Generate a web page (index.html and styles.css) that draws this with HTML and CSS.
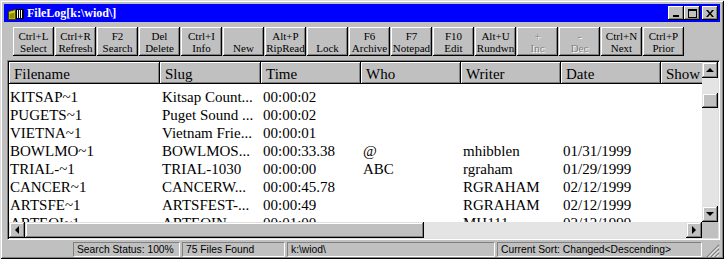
FILE: index.html
```html
<!DOCTYPE html>
<html lang="en">
<head>
  <meta charset="UTF-8" />
  <title>FileLog</title>
  <link rel="stylesheet" href="styles.css">
</head>
<body>
  <div class="window">
    <!-- Title bar -->
    <div class="titlebar">
      <svg class="app-icon" width="16" height="12" viewBox="0 0 16 12">
        <path d="M0.5 3.5 L7.5 1.5 L7.5 11.5 L0.5 11.5 Z" fill="#d8d020" stroke="#404000"/>
        <path d="M1.5 6 L6.5 4.5 L6.5 10.5 L1.5 10.5 Z" fill="#909000"/>
        <rect x="8.5" y="1.5" width="7" height="9" fill="#fff" stroke="#000"/>
        <rect x="10" y="2" width="1" height="8" fill="#000"/>
        <rect x="12" y="2" width="1" height="8" fill="#000"/>
        <rect x="14" y="2" width="1" height="8" fill="#000"/>
      </svg>
      <span class="title">FileLog[k:\wiod\]</span>
      <div class="caption-buttons">
        <span class="cap-btn">
          <svg width="8" height="7" viewBox="0 0 8 7"><rect x="1" y="5" width="6" height="2" fill="#000"/></svg>
        </span>
        <span class="cap-btn">
          <svg width="9" height="9" viewBox="0 0 9 9"><rect x="0.5" y="0.5" width="8" height="8" fill="none" stroke="#000"/><rect x="0" y="1" width="9" height="1" fill="#000"/></svg>
        </span>
        <span class="cap-btn close">
          <svg width="8" height="7" viewBox="0 0 8 7"><path d="M0 0h2l2 2.5L6 0h2L5 3.5 8 7H6L4 4.5 2 7H0l3-3.5z" fill="#000"/></svg>
        </span>
      </div>
    </div>

    <!-- Toolbar -->
    <div class="toolbar">
      <div class="tool"><span class="key">Ctrl+L</span><span>Select</span></div>
      <div class="tool"><span class="key">Ctrl+R</span><span>Refresh</span></div>
      <div class="tool"><span class="key">F2</span><span>Search</span></div>
      <div class="tool"><span class="key">Del</span><span>Delete</span></div>
      <div class="tool"><span class="key">Ctrl+I</span><span>Info</span></div>
      <div class="tool"><span class="key"></span><span>New</span></div>
      <div class="tool"><span class="key">Alt+P</span><span>RipRead</span></div>
      <div class="tool"><span class="key"></span><span>Lock</span></div>
      <div class="tool"><span class="key">F6</span><span>Archive</span></div>
      <div class="tool"><span class="key">F7</span><span>Notepad</span></div>
      <div class="tool"><span class="key">F10</span><span>Edit</span></div>
      <div class="tool"><span class="key">Alt+U</span><span>Rundwn</span></div>
      <div class="tool disabled"><span class="key">+</span><span>Inc</span></div>
      <div class="tool disabled"><span class="key">-</span><span>Dec</span></div>
      <div class="tool"><span class="key">Ctrl+N</span><span>Next</span></div>
      <div class="tool"><span class="key">Ctrl+P</span><span>Prior</span></div>
    </div>

    <!-- File list -->
    <div class="listview">
      <div class="list-header">
        <div class="hcell c-file">Filename</div>
        <div class="hcell c-slug">Slug</div>
        <div class="hcell c-col">Time</div>
        <div class="hcell c-col">Who</div>
        <div class="hcell c-col">Writer</div>
        <div class="hcell c-col">Date</div>
        <div class="hcell c-col">Show</div>
      </div>

      <div class="vscroll">
        <div class="sb-btn"><span class="arrow up"></span></div>
        <div class="sb-track v-before"></div>
        <div class="sb-thumb v-thumb"></div>
        <div class="sb-track fill"></div>
        <div class="sb-btn"><span class="arrow down"></span></div>
      </div>

      <div class="list-body">
        <div class="row"><span class="c-file">KITSAP~1</span><span class="c-slug">Kitsap Count...</span><span class="c-col">00:00:02</span><span class="c-col"></span><span class="c-col"></span><span class="c-col"></span></div>
        <div class="row"><span class="c-file">PUGETS~1</span><span class="c-slug">Puget Sound ...</span><span class="c-col">00:00:02</span><span class="c-col"></span><span class="c-col"></span><span class="c-col"></span></div>
        <div class="row"><span class="c-file">VIETNA~1</span><span class="c-slug">Vietnam Frie...</span><span class="c-col">00:00:01</span><span class="c-col"></span><span class="c-col"></span><span class="c-col"></span></div>
        <div class="row"><span class="c-file">BOWLMO~1</span><span class="c-slug">BOWLMOS...</span><span class="c-col">00:00:33.38</span><span class="c-col">@</span><span class="c-col">mhibblen</span><span class="c-col">01/31/1999</span></div>
        <div class="row"><span class="c-file">TRIAL-~1</span><span class="c-slug">TRIAL-1030</span><span class="c-col">00:00:00</span><span class="c-col">ABC</span><span class="c-col">rgraham</span><span class="c-col">01/29/1999</span></div>
        <div class="row"><span class="c-file">CANCER~1</span><span class="c-slug">CANCERW...</span><span class="c-col">00:00:45.78</span><span class="c-col"></span><span class="c-col">RGRAHAM</span><span class="c-col">02/12/1999</span></div>
        <div class="row"><span class="c-file">ARTSFE~1</span><span class="c-slug">ARTSFEST-...</span><span class="c-col">00:00:49</span><span class="c-col"></span><span class="c-col">RGRAHAM</span><span class="c-col">02/12/1999</span></div>
        <div class="row"><span class="c-file">ARTEQI~1</span><span class="c-slug">ARTEQIN...</span><span class="c-col">00:01:00</span><span class="c-col"></span><span class="c-col">MH111</span><span class="c-col">02/12/1999</span></div>
      </div>

      <div class="hscroll">
        <div class="sb-btn"><span class="arrow left"></span></div>
        <div class="sb-thumb h-thumb"></div>
        <div class="sb-track fill"></div>
        <div class="sb-btn"><span class="arrow right"></span></div>
      </div>
      <div class="corner"></div>
    </div>

    <!-- Status bar -->
    <div class="statusbar">
      <div class="panel p-search">Search Status: 100%</div>
      <div class="panel p-found">75 Files Found</div>
      <div class="panel p-path">k:\wiod\</div>
      <div class="panel p-sort">Current Sort: Changed&lt;Descending&gt;</div>
      <svg class="grip" width="16" height="15" viewBox="0 0 16 15">
        <path d="M15 3 L3 15 M15 7 L7 15 M15 11 L11 15" stroke="#808080" stroke-width="1.2"/>
        <path d="M15 4.5 L4.5 15 M15 8.5 L8.5 15 M15 12.5 L12.5 15" stroke="#fff" stroke-width="1"/>
      </svg>
    </div>
  </div>
</body>
</html>
```

FILE: styles.css
```css
/* ---------------------------------------
   1. RESET & WINDOW FRAME
--------------------------------------- */
* {
  margin: 0;
  padding: 0;
  box-sizing: border-box;
}

html, body {
  width: 724px;
  height: 259px;
  overflow: hidden;
  background: #c0c0c0;
}

.window {
  width: 724px;
  height: 259px;
  padding: 4px 4px 2px 4px;
  background: #c0c0c0;
  display: flex;
  flex-direction: column;
  overflow: hidden;
  font-family: "Liberation Serif", "Times New Roman", serif;
  color: #000;
  box-shadow: inset 1px 1px #dfdfdf, inset -1px -1px #000,
              inset 2px 2px #fff, inset -2px -2px #808080;
}
.window > * {
  flex-shrink: 0;
}

/* ---------------------------------------
   2. TITLE BAR
--------------------------------------- */
.titlebar {
  height: 18px;
  background: #0000ff;
  display: flex;
  align-items: center;
  padding: 0 2px 0 4px;
  color: #fff;
}
.app-icon {
  display: block;
  margin-top: 1px;
}
.title {
  margin-left: 3px;
  font-weight: bold;
  font-size: 12px;
  line-height: 18px;
}
.caption-buttons {
  margin-left: auto;
  display: flex;
}
.cap-btn {
  width: 16px;
  height: 14px;
  background: #c0c0c0;
  display: flex;
  align-items: center;
  justify-content: center;
  box-shadow: inset -1px -1px #000, inset 1px 1px #fff, inset -2px -2px #808080;
}
.cap-btn svg {
  display: block;
}
.cap-btn.close {
  margin-left: 2px;
}

/* ---------------------------------------
   3. TOOLBAR
--------------------------------------- */
.toolbar {
  display: flex;
  gap: 1px;
  margin-top: 5px;
  padding-left: 9px;
}
.tool {
  width: 41px;
  height: 29px;
  display: flex;
  flex-direction: column;
  align-items: center;
  justify-content: center;
  font-size: 11px;
  line-height: 12px;
  white-space: nowrap;
  box-shadow: inset -1px -1px #000, inset 1px 1px #fff, inset -2px -2px #808080;
}
.tool span {
  display: block;
  height: 12px;
}
.tool.disabled {
  color: #808080;
  text-shadow: 1px 1px #fff;
}

/* ---------------------------------------
   4. LIST VIEW
--------------------------------------- */
.listview {
  margin-top: 4px;
  margin-left: 3px;
  height: 180px;
  border: 1px solid;
  border-color: #808080 #fff #fff #808080;
  padding: 1px;
  box-shadow: inset 1px 1px #000, inset -1px -1px #dfdfdf;
  display: grid;
  grid-template-columns: 1fr 16px;
  grid-template-rows: 22px 1fr 16px;
  font-size: 15px;
}

.list-header {
  grid-row: 1;
  grid-column: 1;
  display: flex;
  overflow: hidden;
  background: #c0c0c0;
}
.hcell {
  flex-shrink: 0;
  height: 22px;
  line-height: 20px;
  padding: 2px 0 0 5px;
  white-space: nowrap;
  border-right: 1px solid #000;
  border-bottom: 1px solid #000;
  box-shadow: inset 1px 1px #fff, inset -1px -1px #808080;
}

.c-file { width: 151px; }
.c-slug { width: 101px; }
.c-col { width: 100px; }

.list-body {
  grid-row: 2;
  grid-column: 1;
  background: #fff;
  overflow: hidden;
  padding-top: 4px;
}
.row {
  display: flex;
  height: 18px;
  line-height: 18px;
  white-space: nowrap;
}
.row span {
  flex-shrink: 0;
  padding-left: 2px;
  overflow: hidden;
}
.row .c-file {
  padding-left: 1px;
}

/* ---------------------------------------
   5. SCROLLBARS
--------------------------------------- */
.vscroll {
  grid-row: 1 / 3;
  grid-column: 2;
  display: flex;
  flex-direction: column;
}
.hscroll {
  grid-row: 3;
  grid-column: 1;
  display: flex;
}
.corner {
  grid-row: 3;
  grid-column: 2;
  background: #c0c0c0;
}
.sb-btn, .sb-thumb {
  flex-shrink: 0;
  background: #c0c0c0;
  box-shadow: inset -1px -1px #000, inset 1px 1px #dfdfdf,
              inset -2px -2px #808080, inset 2px 2px #fff;
}
.sb-btn {
  width: 16px;
  height: 16px;
  display: flex;
  align-items: center;
  justify-content: center;
}
.sb-track {
  background: #e4e4e4;
}
.sb-track.fill {
  flex: 1;
}
.v-before {
  height: 15px;
}
.v-thumb {
  height: 15px;
}
.h-thumb {
  width: 399px;
}

.arrow {
  width: 0;
  height: 0;
  border: 0 solid transparent;
}
.arrow.up {
  border-width: 0 4px 4px 4px;
  border-bottom-color: #000;
  margin-top: -1px;
}
.arrow.down {
  border-width: 4px 4px 0 4px;
  border-top-color: #000;
}
.arrow.left {
  border-width: 4px 4px 4px 0;
  border-right-color: #000;
}
.arrow.right {
  border-width: 4px 0 4px 4px;
  border-left-color: #000;
}

/* ---------------------------------------
   6. STATUS BAR
--------------------------------------- */
.statusbar {
  margin-top: 2px;
  height: 15px;
  display: flex;
  padding-left: 69px;
  font-family: "Liberation Sans", Arial, sans-serif;
  font-size: 10.3px;
}
.panel {
  height: 15px;
  line-height: 14px;
  padding-left: 3px;
  margin-right: 2px;
  white-space: nowrap;
  overflow: hidden;
  border: 1px solid;
  border-color: #808080 #fff #fff #808080;
}
.p-search { width: 107px; }
.p-found { width: 103px; }
.p-path { width: 208px; }
.p-sort { width: 205px; }
.grip {
  display: block;
  margin-left: auto;
}
```
